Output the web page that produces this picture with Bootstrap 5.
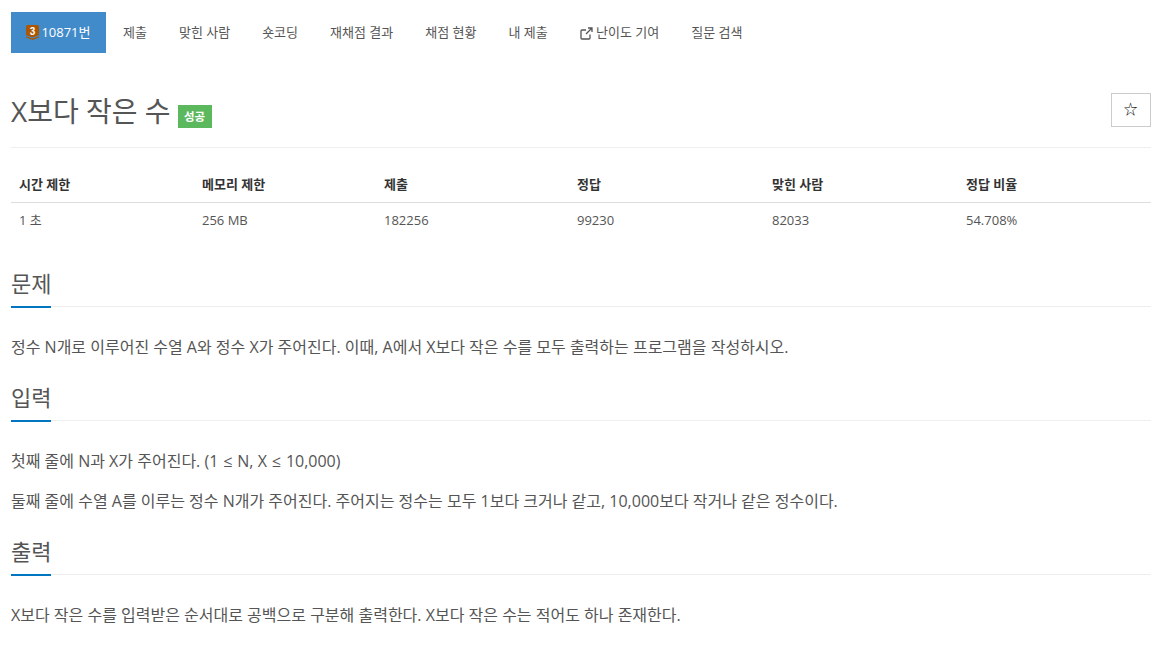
<!DOCTYPE html>
<html lang="ko">
<head>
  <meta charset="UTF-8" />
  <meta name="viewport" content="width=device-width, initial-scale=1" />
  <title>X보다 작은 수</title>
  <link href="https://cdn.jsdelivr.net/npm/bootstrap@5.3.3/dist/css/bootstrap.min.css" rel="stylesheet" />
  <style>
    body {
      font-family: "Open Sans", "Noto Sans CJK KR", sans-serif;
      color: #555;
      font-size: 14px;
      background: #fff;
    }

    .page-wrap {
      padding: 12px 13px 0 11px;
    }

    .tab-bar {
      height: 41px;
      font-size: 13px;
    }

    .tab-bar a {
      color: #555;
      text-decoration: none;
      padding: 0 15px;
      margin-right: 2px;
      line-height: 41px;
      display: block;
    }

    .tab-bar a.tab-on {
      background: #428bca;
      color: #fff;
      margin-right: 2.5px;
    }

    .tier-ico {
      vertical-align: -3px;
      margin-right: -1px;
    }

    .title-row {
      margin-top: 38px;
      padding-bottom: 16px;
      border-bottom: 1px solid #eee;
    }

    .title-row h1 {
      font-size: 28px;
      line-height: 40px;
      font-weight: 400;
      color: #555;
      margin: 0;
    }

    .tag-ok {
      background: #5cb85c;
      color: #fff;
      font-size: 11.5px;
      font-weight: 700;
      padding: 0 6.5px;
      line-height: 23px;
      margin: 14px 0 0 7px;
    }

    .star-btn {
      width: 40px;
      height: 34px;
      margin-top: 2px;
      border: 1px solid #ccc;
      background: #fff;
      color: #111;
      padding: 0 1px 3px 0;
      border-radius: 0;
    }

    .info-table {
      margin: 19px 0 26px;
      font-size: 13px;
      color: #555;
    }

    .info-table th {
      color: #333;
      font-weight: 700;
      padding: 8px 8px 7px;
      border-bottom: 1px solid #ddd;
    }

    .info-table th:nth-child(1) { width: 183px; }
    .info-table th:nth-child(2) { width: 182px; }
    .info-table th:nth-child(3) { width: 193px; }
    .info-table th:nth-child(4) { width: 195px; }
    .info-table th:nth-child(5) { width: 194px; }

    .info-table td {
      padding: 8px;
      height: 36px;
      border: 0;
    }

    .sec-head {
      border-bottom: 1px solid #eee;
      height: 43px;
      margin-top: 18px;
    }

    .sec-head h2 {
      display: inline-block;
      font-size: 22px;
      font-weight: 400;
      line-height: 30px;
      height: 44px;
      margin: 0;
      padding-top: 4px;
      border-bottom: 2px solid #0076c0;
      color: #555;
    }

    .sec-text {
      font-size: 16px;
      line-height: 26px;
      margin: 0 0 14px;
    }

    .math-sign {
      padding: 0 .75px;
    }

    .sec-body {
      padding-top: 27px;
    }
  </style>
</head>

<body>
  <div class="page-wrap">
    <nav class="tab-bar d-flex">
      <a class="tab-on" href="#">
        <svg class="tier-ico" width="13" height="15" viewBox="0 0 13 15"><path d="M0 1.5A1.5 1.5 0 0 1 1.5 0h10A1.5 1.5 0 0 1 13 1.5V10l-6.5 2.5L0 10z" fill="#ad5600"/><path d="M0 11.2l6.5 2.4 6.5-2.4v1.2L6.5 15 0 12.4z" fill="#ad5600"/><text x="6.5" y="9.6" font-size="10" font-weight="700" text-anchor="middle" fill="#fff" font-family="Liberation Sans, sans-serif">3</text></svg>
        10871번
      </a>
      <a href="#">제출</a>
      <a href="#">맞힌 사람</a>
      <a href="#">숏코딩</a>
      <a href="#">재채점 결과</a>
      <a href="#">채점 현황</a>
      <a href="#">내 제출</a>
      <a href="#">
        <svg width="13" height="13" viewBox="0 0 13 13" fill="none" stroke="#555" stroke-width="1.3"><path d="M10 7.5V11a1 1 0 0 1-1 1H2a1 1 0 0 1-1-1V4a1 1 0 0 1 1-1h4"/><path d="M8 1h4v4M12 1 6 7"/></svg>
        난이도 기여
      </a>
      <a href="#">질문 검색</a>
    </nav>

    <div class="title-row d-flex justify-content-between align-items-start">
      <div class="d-flex align-items-start">
        <h1>X보다 작은 수</h1>
        <span class="tag-ok">성공</span>
      </div>
      <button class="star-btn" type="button">☆</button>
    </div>

    <table class="table info-table">
      <thead>
        <tr><th>시간 제한</th><th>메모리 제한</th><th>제출</th><th>정답</th><th>맞힌 사람</th><th>정답 비율</th></tr>
      </thead>
      <tbody>
        <tr><td>1 초</td><td>256 MB</td><td>182256</td><td>99230</td><td>82033</td><td>54.708%</td></tr>
      </tbody>
    </table>

    <div class="sec-head"><h2>문제</h2></div>
    <div class="sec-body">
      <p class="sec-text">정수 N개로 이루어진 수열 A와 정수 X가 주어진다. 이때, A에서 X보다 작은 수를 모두 출력하는 프로그램을 작성하시오.</p>
    </div>

    <div class="sec-head"><h2>입력</h2></div>
    <div class="sec-body">
      <p class="sec-text">첫째 줄에 N과 X가 주어진다. (1 <span class="math-sign">≤</span> N, X <span class="math-sign">≤</span> 10,000)</p>
      <p class="sec-text">둘째 줄에 수열 A를 이루는 정수 N개가 주어진다. 주어지는 정수는 모두 1보다 크거나 같고, 10,000보다 작거나 같은 정수이다.</p>
    </div>

    <div class="sec-head"><h2>출력</h2></div>
    <div class="sec-body">
      <p class="sec-text">X보다 작은 수를 입력받은 순서대로 공백으로 구분해 출력한다. X보다 작은 수는 적어도 하나 존재한다.</p>
    </div>
  </div>
</body>
</html>
